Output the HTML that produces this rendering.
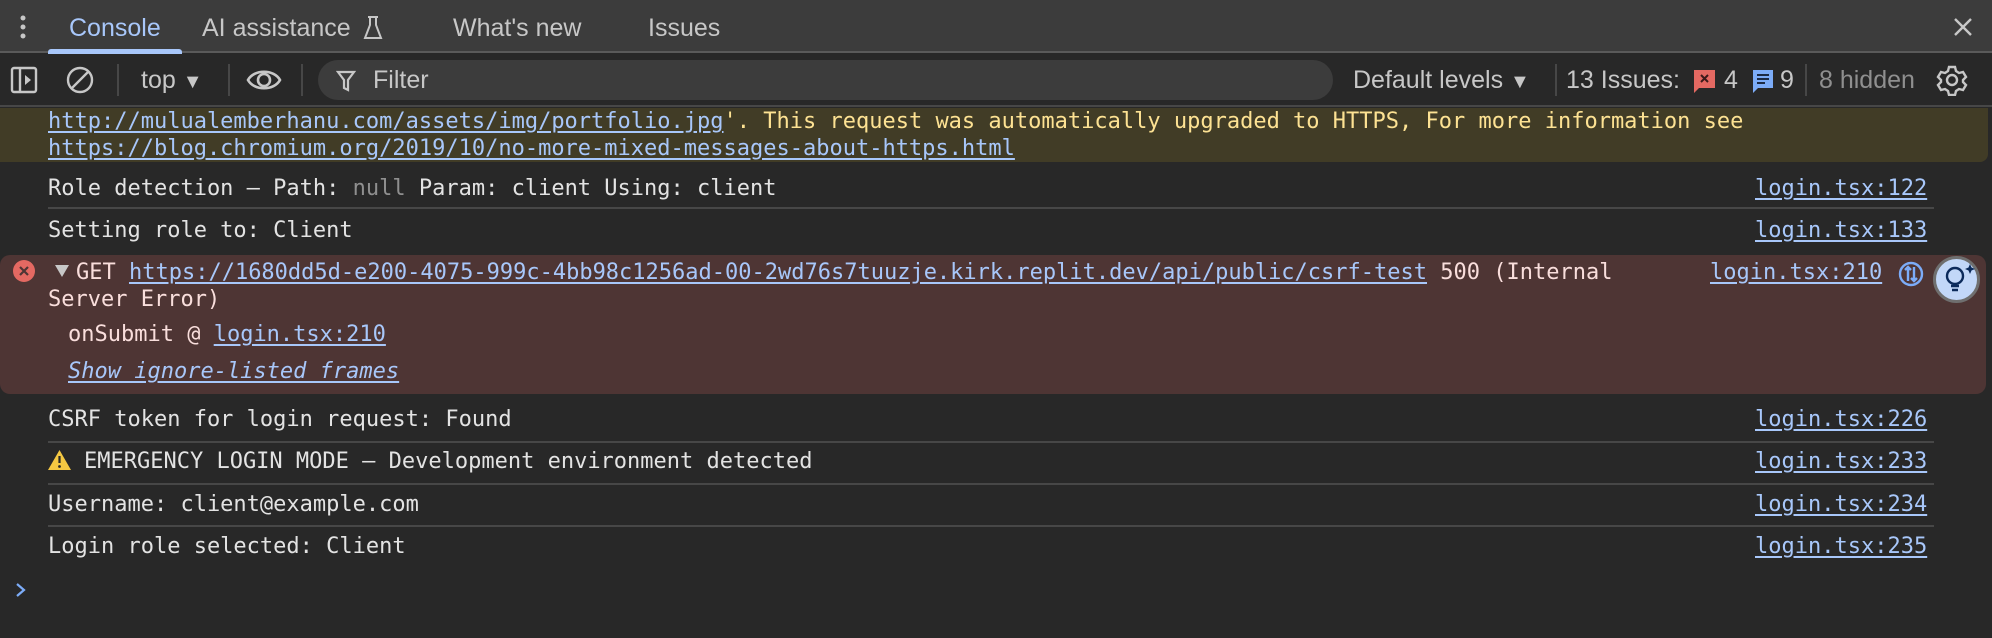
<!DOCTYPE html>
<html><head><meta charset="utf-8"><style>
*{margin:0;padding:0;box-sizing:border-box}
body{width:1992px;height:638px;background:#282828;position:relative;overflow:hidden;font-family:"Liberation Sans",sans-serif;color:#e3e3e3}
.a{position:absolute;white-space:nowrap}
.m{font-family:"DejaVu Sans Mono","Liberation Mono",monospace;font-size:22px;line-height:28px;color:#e3e3e3}
.lk{color:#a8c7fa;text-decoration:underline;text-underline-offset:3px}
.sep{position:absolute;left:48px;width:1886px;height:2px;background:#474747}
.tb{font-size:25px;line-height:28px;color:#c7c7c7}
.vs{position:absolute;top:64px;width:2px;height:32px;background:#474747}
.tri{font-size:20px}
</style></head><body>
<!-- tab bar -->
<div class="a" style="left:0;top:0;width:1992px;height:53px;background:#3c3c3c;border-bottom:2px solid #5a5a5a"></div>
<svg class="a" style="left:18px;top:14px" width="10" height="26"><circle cx="5" cy="4" r="2.5" fill="#c7c7c7"/><circle cx="5" cy="13" r="2.5" fill="#c7c7c7"/><circle cx="5" cy="22" r="2.5" fill="#c7c7c7"/></svg>
<div class="a tb" style="left:69px;top:14px;color:#a8c7fa">Console</div>
<div class="a" style="left:48px;top:49px;width:134px;height:5px;background:#a8c7fa;border-radius:3px 3px 0 0"></div>
<div class="a tb" style="left:202px;top:14px">AI assistance</div>
<svg class="a" style="left:362px;top:15px" width="22" height="26" fill="none" stroke="#c7c7c7" stroke-width="2"><path d="M6 2h10M8 2v8L3 23h16L14 10V2"/></svg>
<div class="a tb" style="left:453px;top:14px">What's new</div>
<div class="a tb" style="left:648px;top:14px">Issues</div>
<svg class="a" style="left:1952px;top:16px" width="22" height="22" stroke="#c7c7c7" stroke-width="2.4"><path d="M3 3L19 19M19 3L3 19"/></svg>
<!-- toolbar -->
<div class="a" style="left:0;top:55px;width:1992px;height:52px;background:#282828;border-bottom:2px solid #474747"></div>
<svg class="a" style="left:10px;top:66px" width="28" height="28" fill="none" stroke="#c7c7c7" stroke-width="2.4"><rect x="2" y="2" width="24" height="24" rx="2"/><path d="M10 2v24"/><path d="M15 9l6 5-6 5z" fill="#c7c7c7" stroke="none"/></svg>
<svg class="a" style="left:66px;top:66px" width="28" height="28" fill="none" stroke="#c7c7c7" stroke-width="2.4"><circle cx="14" cy="14" r="12"/><path d="M22 6L6 22"/></svg>
<div class="vs" style="left:117px"></div>
<div class="a tb" style="left:141px;top:66px">top <span class="tri">▼</span></div>
<div class="vs" style="left:228px"></div>
<svg class="a" style="left:246px;top:66px" width="36" height="28" fill="none" stroke="#c7c7c7" stroke-width="2.6"><path d="M2 14C8 3 28 3 34 14C28 25 8 25 2 14z"/><circle cx="18" cy="14" r="6"/></svg>
<div class="vs" style="left:301px"></div>
<div class="a" style="left:318px;top:60px;width:1015px;height:40px;background:#3c3c3c;border-radius:20px"></div>
<svg class="a" style="left:336px;top:69px" width="20" height="24" fill="none" stroke="#c7c7c7" stroke-width="2.2"><path d="M2 3h16l-6 8v10l-4-2v-8z"/></svg>
<div class="a tb" style="left:373px;top:66px">Filter</div>
<div class="a tb" style="left:1353px;top:66px">Default levels <span class="tri">▼</span></div>
<div class="vs" style="left:1555px"></div>
<div class="a tb" style="left:1566px;top:66px">13 Issues:</div>
<svg class="a" style="left:1693px;top:69px" width="24" height="26"><path d="M1 1h21v18H6l-5 5z" fill="#e46962"/><path d="M8 6l7 7M15 6l-7 7" stroke="#3c1a1a" stroke-width="2"/></svg>
<div class="a tb" style="left:1724px;top:66px">4</div>
<svg class="a" style="left:1752px;top:69px" width="22" height="26"><path d="M1 1h20v18H6l-5 5z" fill="#7cacf8"/><path d="M5 6h12M5 10h12M5 14h8" stroke="#1c2b45" stroke-width="2"/></svg>
<div class="a tb" style="left:1780px;top:66px">9</div>
<div class="vs" style="left:1805px"></div>
<div class="a tb" style="left:1819px;top:66px;color:#8f8f8f">8 hidden</div>
<svg class="a" style="left:1936px;top:64px" width="32" height="32" fill="none" stroke="#c7c7c7" stroke-width="2.4"><circle cx="16" cy="16" r="5"/><path d="M13 3h6l1 4 3 2 4-1 3 5-3 3v2l3 3-3 5-4-1-3 2-1 4h-6l-1-4-3-2-4 1-3-5 3-3v-2L2 13l3-5 4 1 3-2z"/></svg>
<!-- warning -->
<div class="a" style="left:0;top:108px;width:1988px;height:54px;background:#413c26;border-radius:0 0 8px 0"></div>
<div class="a m" style="left:48px;top:108px;color:#fde293"><span class="lk">http://mulualemberhanu.com/assets/img/portfolio.jpg</span>'. This request was automatically upgraded to HTTPS, For more information see</div>
<div class="a m" style="left:48px;top:135px"><span class="lk">https://blog.chromium.org/2019/10/no-more-mixed-messages-about-https.html</span></div>
<!-- rows -->
<div class="a m" style="left:48px;top:175px">Role detection – Path: <span style="color:#8f8f8f">null</span> Param: client Using: client</div>
<div class="a m lk" style="left:1755px;top:175px">login.tsx:122</div>
<div class="sep" style="top:207px"></div>
<div class="a m" style="left:48px;top:217px">Setting role to: Client</div>
<div class="a m lk" style="left:1755px;top:217px">login.tsx:133</div>
<!-- error -->
<div class="a" style="left:0;top:255px;width:1986px;height:139px;background:#4e3534;border-radius:10px"></div>
<svg class="a" style="left:13px;top:260px" width="22" height="22"><circle cx="11" cy="11" r="11" fill="#e46962"/><path d="M7 7l8 8M15 7l-8 8" stroke="#4e3534" stroke-width="2.2"/></svg>
<svg class="a" style="left:55px;top:265px" width="14" height="12"><path d="M0 0h14L7 12z" fill="#c7c7c7"/></svg>
<div class="a m" style="left:76px;top:259px;color:#f9dedc">GET <span class="lk">https://1680dd5d-e200-4075-999c-4bb98c1256ad-00-2wd76s7tuuzje.kirk.replit.dev/api/public/csrf-test</span> 500 (Internal</div>
<div class="a m lk" style="left:1710px;top:259px">login.tsx:210</div>
<div class="a m" style="left:48px;top:286px;color:#f9dedc">Server Error)</div>
<div class="a m" style="left:68px;top:321px;color:#f9dedc">onSubmit @ <span class="lk">login.tsx:210</span></div>
<div class="a m lk" style="left:68px;top:358px;font-style:italic">Show ignore-listed frames</div>
<svg class="a" style="left:1898px;top:261px" width="26" height="26" fill="none" stroke="#7cacf8" stroke-width="2.4"><circle cx="13" cy="13" r="11"/><path d="M10 6v14M7 9l3-3 3 3M16 20V6M13 17l3 3 3-3"/></svg>
<div class="a" style="left:1933px;top:256px;width:47px;height:47px;border-radius:50%;background:#c2d7f8;border:3px solid #6f6f6f"></div>
<svg class="a" style="left:1940px;top:262px" width="36" height="34" fill="none" stroke="#0b2a5b" stroke-width="2.4"><circle cx="15" cy="14" r="8"/><path d="M11 24h8M12 28h6"/><path d="M30 2l1.5 3.5L35 7l-3.5 1.5L30 12l-1.5-3.5L25 7l3.5-1.5z" fill="#0b2a5b" stroke="none"/></svg>
<div class="a m" style="left:48px;top:406px">CSRF token for login request: Found</div>
<div class="a m lk" style="left:1755px;top:406px">login.tsx:226</div>
<div class="sep" style="top:441px"></div>
<svg class="a" style="left:47px;top:449px" width="25" height="22"><path d="M12.5 1L24 21H1z" fill="#f5c842"/><path d="M12.5 7v7" stroke="#282828" stroke-width="2.2"/><circle cx="12.5" cy="17.5" r="1.4" fill="#282828"/></svg>
<div class="a m" style="left:84px;top:448px">EMERGENCY LOGIN MODE – Development environment detected</div>
<div class="a m lk" style="left:1755px;top:448px">login.tsx:233</div>
<div class="sep" style="top:483px"></div>
<div class="a m" style="left:48px;top:491px">Username: client@example.com</div>
<div class="a m lk" style="left:1755px;top:491px">login.tsx:234</div>
<div class="sep" style="top:525px"></div>
<div class="a m" style="left:48px;top:533px">Login role selected: Client</div>
<div class="a m lk" style="left:1755px;top:533px">login.tsx:235</div>
<svg class="a" style="left:15px;top:582px" width="12" height="16" fill="none" stroke="#7cacf8" stroke-width="2.2"><path d="M2 2l7 6-7 6"/></svg>
</body></html>
